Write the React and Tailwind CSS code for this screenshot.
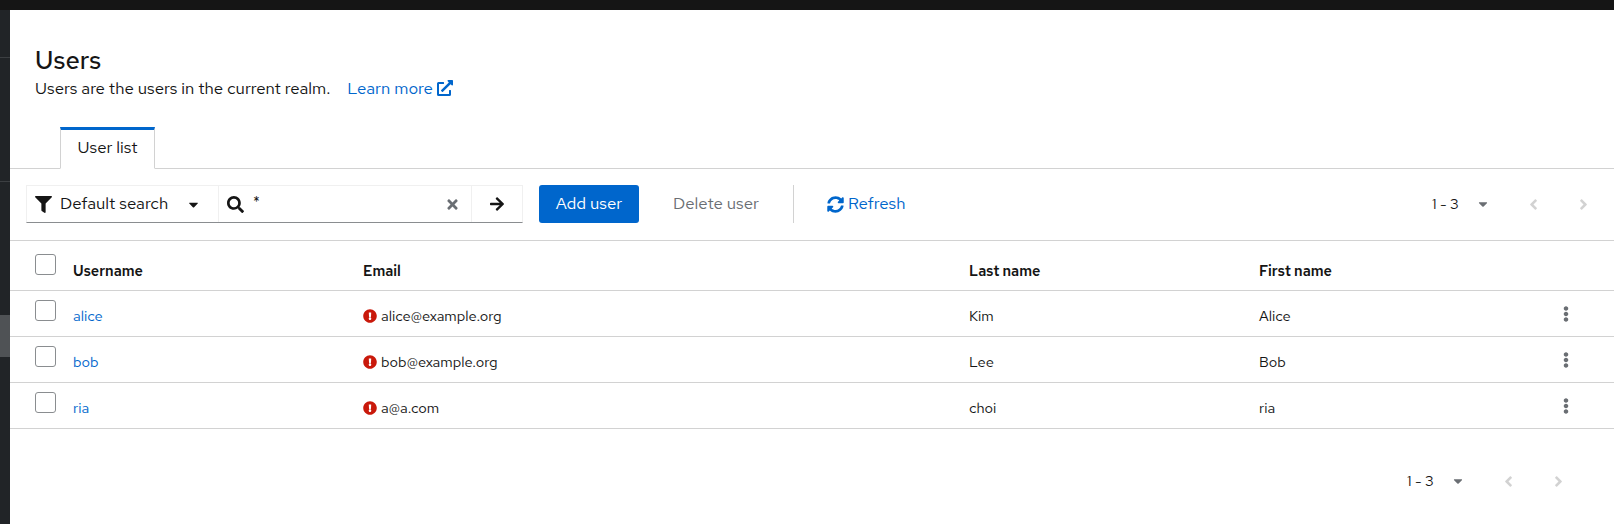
import React from "react";
import { FaFilter, FaSearch, FaTimes, FaArrowRight, FaCaretDown, FaAngleLeft, FaAngleRight, FaEllipsisV, FaExclamationCircle, FaExternalLinkAlt, FaSyncAlt } from "react-icons/fa";

const font = "font-['Red_Hat_Text','Inter','Liberation_Sans',sans-serif]";

function Pager() {
  return (
    <div className="flex items-center text-[#151515] text-[14.7px] leading-[20px]">
      <span className="w-[44px]">1 - 3</span>
      <FaCaretDown className="w-[14px] h-[14px] text-[#6a6e73]" />
      <div className="w-[48px] flex justify-center ml-[19px]"><FaAngleLeft className="w-[17px] h-[17px] text-[#d2d2d2]" /></div>
      <div className="w-[48px] flex justify-center ml-[2px]"><FaAngleRight className="w-[17px] h-[17px] text-[#d2d2d2]" /></div>
    </div>
  );
}

function Check() {
  return <div className="w-[21px] h-[21px] rounded-[3px] border border-[#8a8d90] bg-white" />;
}

const users = [
  ["alice", "alice@example.org", "Kim", "Alice"],
  ["bob", "bob@example.org", "Lee", "Bob"],
  ["ria", "a@a.com", "choi", "ria"],
];

function Row({ u }) {
  return (
    <div className="flex h-[46px] items-center border-b border-[#d2d2d2] text-[14.7px] leading-[20px] text-[#151515]">
      <div className="w-[63px] pl-[25px] shrink-0 self-start pt-[9px]"><Check /></div>
      <a className="w-[290px] shrink-0 text-[#0066cc] pt-[5px]">{u[0]}</a>
      <div className="w-[606px] shrink-0 flex items-center gap-[4px] pt-[5px]">
        <FaExclamationCircle className="w-[14px] h-[14px] text-[#c9190b] -mt-[1px]" />
        <span>{u[1]}</span>
      </div>
      <div className="w-[290px] shrink-0 pt-[5px]">{u[2]}</div>
      <div className="flex-1 pt-[5px]">{u[3]}</div>
      <FaEllipsisV className="w-[16px] h-[16px] text-[#6a6e73] mr-[40px] mt-[1px]" />
    </div>
  );
}

export default function App() {
  return (
    <div className={"w-[1614px] h-[524px] overflow-hidden flex flex-col bg-[#151515] " + font}>
      <div className="h-[10px] shrink-0" />
      <div className="flex flex-1 min-h-0">
        <div className="w-[10px] shrink-0 bg-[#212427] flex flex-col">
          <div className="h-[48px] border-b border-[#3c3f42]" />
          <div className="h-[124px] border-b border-[#3c3f42]" />
          <div className="h-[133px]" />
          <div className="h-[42px] bg-[#4f5255]" />
        </div>
        <div className="flex-1 bg-white flex flex-col min-w-0">
          <div className="pl-[25px] pt-[35px] h-[117px] shrink-0">
            <h1 className="text-[25.4px] font-medium leading-[30px] text-[#151515]">Users</h1>
            <p className="text-[16.8px] leading-[26px] text-[#151515] flex items-center">
              <span>Users are the users in the current realm.</span>
              <a className="ml-[17px] inline-flex items-center gap-[4px] text-[#0066cc]">Learn more <FaExternalLinkAlt className="w-[16px] h-[16px]" /></a>
            </p>
          </div>
          <div className="h-[42px] shrink-0 flex border-b border-[#d2d2d2] pl-[50px]">
            <div className="w-[95px] h-[42px] pb-[2px] bg-white border-x border-b border-x-[#d2d2d2] border-b-white border-t-[3px] border-t-[#0066cc] flex items-center justify-center text-[16.8px] text-[#151515]">User list</div>
          </div>
          <div className="h-[72px] shrink-0 flex items-start pt-[16px] border-b border-[#d2d2d2] pl-[16px]">
            <div className="flex h-[38px] w-[497px] border border-[#f0f0f0] border-b-[#8a8d90] text-[16.8px] text-[#151515]">
              <div className="w-[192px] flex items-center pl-[8px] border-r border-[#f0f0f0]">
                <FaFilter className="w-[17px] h-[17px]" />
                <span className="ml-[8px]">Default search</span>
                <FaCaretDown className="w-[15px] h-[15px] ml-auto mr-[17px]" />
              </div>
              <div className="flex-1 flex items-center pl-[8px] border-r border-[#f0f0f0]">
                <FaSearch className="w-[17px] h-[17px]" />
                <span className="ml-[9px] text-[15px] -mt-[3px]">*</span>
                <FaTimes className="w-[15px] h-[15px] ml-auto mr-[11px] text-[#6a6e73]" />
              </div>
              <div className="w-[50px] flex items-center justify-center"><FaArrowRight className="w-[16px] h-[16px]" /></div>
            </div>
            <button className="ml-[16px] w-[100px] h-[38px] rounded-[3px] bg-[#0066cc] text-white text-[16.8px]">Add user</button>
            <span className="ml-[34px] h-[38px] flex items-center text-[16.8px] text-[#6a6e73]">Delete user</span>
            <div className="ml-[34px] w-px h-[38px] bg-[#d2d2d2]" />
            <div className="ml-[33px] h-[38px] flex items-center gap-[4px] text-[16.8px] text-[#0066cc]"><FaSyncAlt className="w-[17px] h-[17px]" /> Refresh</div>
            <div className="ml-auto mr-[7px] h-[38px] flex items-center"><Pager /></div>
          </div>
          <div className="flex h-[50px] shrink-0 items-center border-b border-[#d2d2d2] text-[14.5px] leading-[20px] font-semibold text-[#151515]">
            <div className="w-[63px] pl-[25px] shrink-0 self-start pt-[13px]"><Check /></div>
            <div className="w-[290px] shrink-0 pt-[11px]">Username</div>
            <div className="w-[606px] shrink-0 pt-[11px]">Email</div>
            <div className="w-[290px] shrink-0 pt-[11px]">Last name</div>
            <div className="pt-[11px]">First name</div>
          </div>
          {users.map((u) => <Row key={u[0]} u={u} />)}
          <div className="flex justify-end pt-[42px] pr-[32px]"><Pager /></div>
        </div>
      </div>
    </div>
  );
}
